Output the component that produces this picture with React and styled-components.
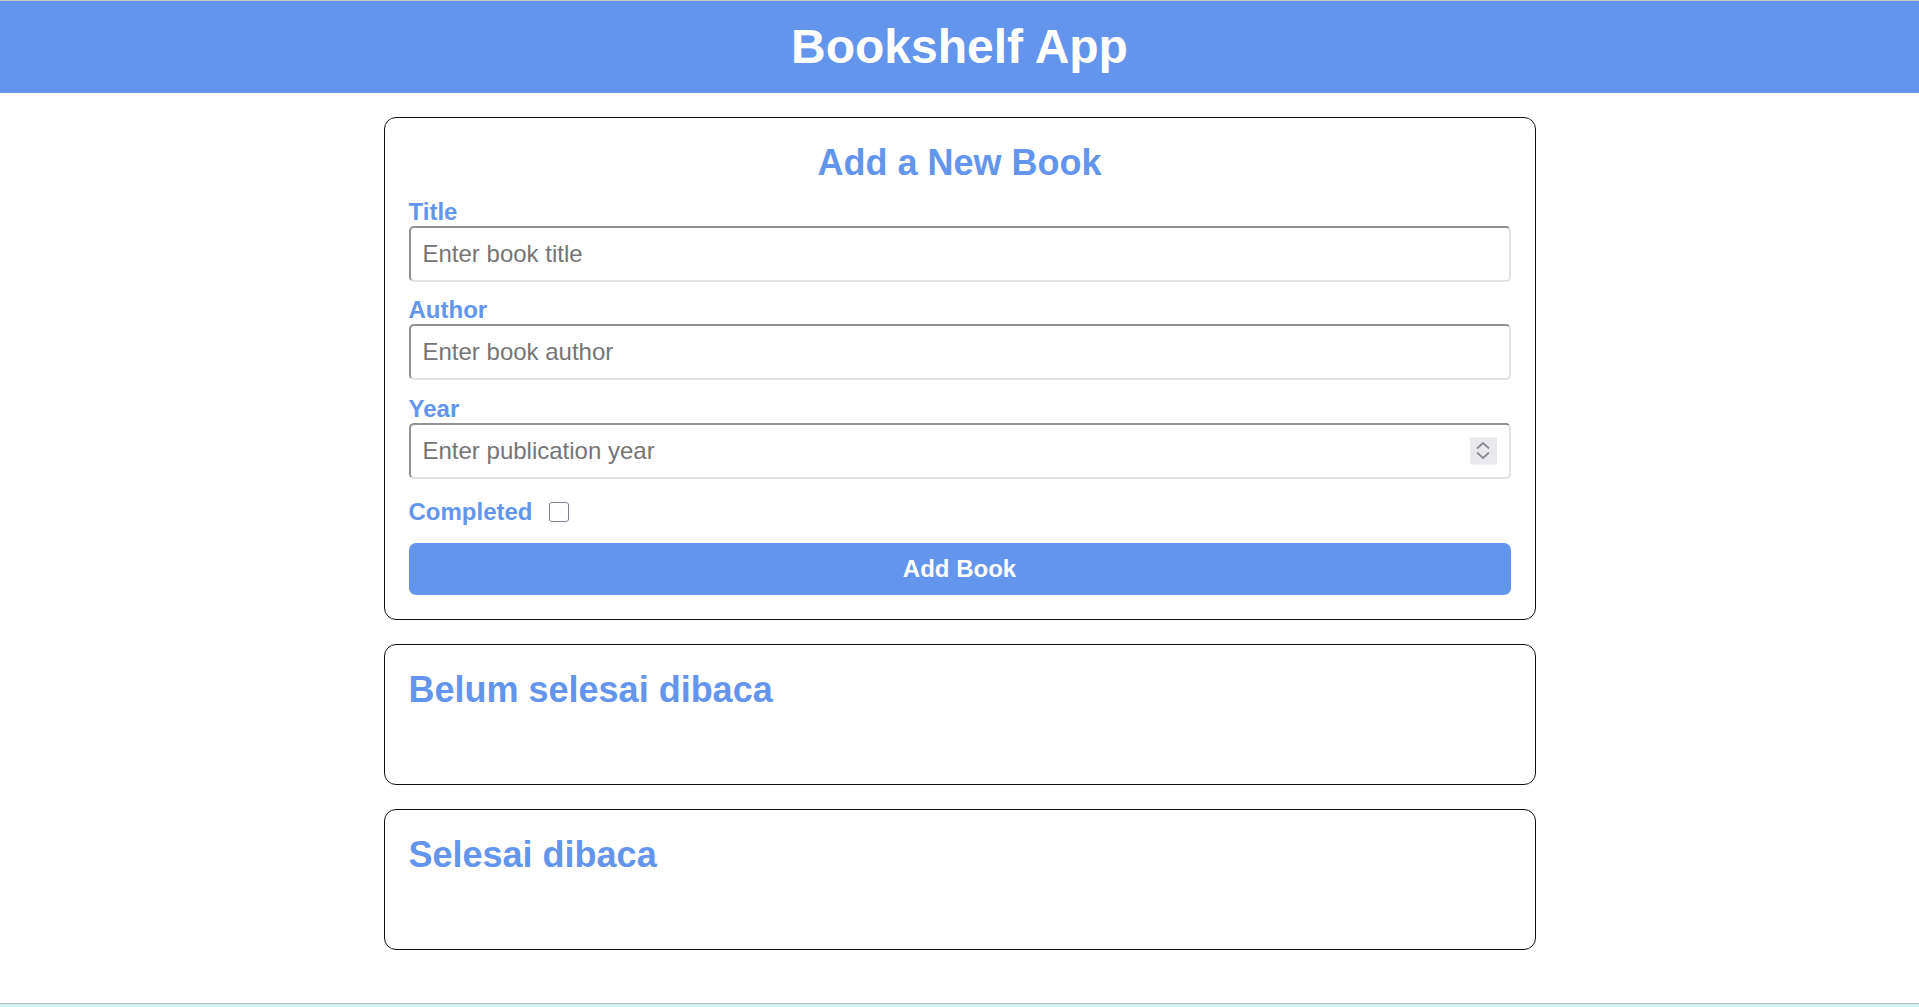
import React from "react";
import styled, { createGlobalStyle } from "styled-components";

const GlobalStyle = createGlobalStyle`
  html, body {
    margin: 0;
    padding: 0;
  }
  body {
    font-family: "Liberation Sans", Arial, sans-serif;
    background: #ffffff;
    color: #000;
  }
  #root {
    min-height: 100vh;
    display: flex;
    flex-direction: column;
  }
`;

const blue = "#6495ed";

const Header = styled.header`
  background: ${blue};
  border-top: 1px solid #c9c9c9;
  height: 92px;
  display: flex;
  align-items: center;
  justify-content: center;
`;

const AppTitle = styled.h1`
  margin: 0 0 1px;
  color: #ffffff;
  font-size: 48px;
  font-weight: 700;
  line-height: normal;
`;

const Main = styled.main`
  width: 1152px;
  margin: 24px auto 0;
  display: flex;
  flex-direction: column;
  gap: 24px;
`;

const Card = styled.section`
  border: 1px solid #111111;
  border-radius: 12px;
  padding: 24px;
  box-sizing: border-box;
`;

const CardTitle = styled.h2`
  margin: 0 0 ${(p) => (p.$center ? "14px" : "14.5px")};
  color: ${blue};
  font-size: 36px;
  font-weight: 700;
  line-height: normal;
  text-align: ${(p) => (p.$center ? "center" : "left")};
`;

const Form = styled.form`
  display: flex;
  flex-direction: column;
`;

const Field = styled.div`
  display: flex;
  flex-direction: column;
  margin-bottom: ${(p) => (p.$last ? "0" : "14.3px")};
`;

const Label = styled.label`
  color: ${blue};
  font-size: 24px;
  font-weight: 700;
  line-height: normal;
`;

const InputWrap = styled.div`
  position: relative;
`;

const Input = styled.input`
  width: 100%;
  box-sizing: border-box;
  font-family: "Liberation Sans", Arial, sans-serif;
  font-size: 24px;
  line-height: normal;
  padding: 12px;
  border-width: 2px;
  border-style: solid;
  border-color: #929292 #e2e2e2 #e2e2e2 #929292;
  border-radius: 5px;
  background: #fff;
  color: #000;
  outline: none;
  -moz-appearance: textfield;
  &::placeholder {
    color: #757575;
  }
  &::-webkit-outer-spin-button,
  &::-webkit-inner-spin-button {
    -webkit-appearance: none;
    margin: 0;
  }
`;

const Spinner = styled.div`
  position: absolute;
  right: 14px;
  top: 50%;
  transform: translateY(-50%);
  width: 27px;
  height: 27px;
  background: #e9e9ed;
  display: flex;
  align-items: center;
  justify-content: center;
`;

const CheckRow = styled.div`
  display: flex;
  align-items: center;
  margin-top: 19.8px;
`;

const Checkbox = styled.input.attrs({ type: "checkbox" })`
  appearance: none;
  -webkit-appearance: none;
  width: 20px;
  height: 20px;
  margin: 0 0 0 16px;
  border: 1px solid #80808f;
  border-radius: 3px;
  background: #fff;
  box-sizing: border-box;
`;

const SubmitButton = styled.button`
  margin-top: 17px;
  width: 100%;
  border: none;
  border-radius: 7px;
  background: ${blue};
  color: #ffffff;
  font-family: "Liberation Sans", Arial, sans-serif;
  font-size: 24px;
  font-weight: 700;
  line-height: normal;
  padding: 12px;
  height: 52px;
  cursor: pointer;
`;

const BookList = styled.div`
  min-height: 34.5px;
`;

const Footer = styled.footer`
  margin-top: auto;
  height: 3px;
  border-top: 1px solid #b2bfbf;
  background: #d2f0f0;
`;

function SpinIcon() {
  return (
    <svg width="16" height="20" viewBox="0 0 16 20" fill="none">
      <path d="M2.5 7.5 L8 2.5 L13.5 7.5" stroke="#8a8a96" strokeWidth="1.8" strokeLinecap="round" strokeLinejoin="round" />
      <path d="M2.5 12.5 L8 17.5 L13.5 12.5" stroke="#8a8a96" strokeWidth="1.8" strokeLinecap="round" strokeLinejoin="round" />
    </svg>
  );
}

export default function App() {
  return (
    <>
      <GlobalStyle />
      <Header>
        <AppTitle>Bookshelf App</AppTitle>
      </Header>
      <Main>
        <Card>
          <CardTitle $center>Add a New Book</CardTitle>
          <Form onSubmit={(e) => e.preventDefault()}>
            <Field>
              <Label htmlFor="title">Title</Label>
              <Input id="title" type="text" placeholder="Enter book title" />
            </Field>
            <Field>
              <Label htmlFor="author">Author</Label>
              <Input id="author" type="text" placeholder="Enter book author" />
            </Field>
            <Field $last>
              <Label htmlFor="year">Year</Label>
              <InputWrap>
                <Input id="year" type="number" placeholder="Enter publication year" />
                <Spinner>
                  <SpinIcon />
                </Spinner>
              </InputWrap>
            </Field>
            <CheckRow>
              <Label htmlFor="completed">Completed</Label>
              <Checkbox id="completed" />
            </CheckRow>
            <SubmitButton type="submit">Add Book</SubmitButton>
          </Form>
        </Card>
        <Card>
          <CardTitle>Belum selesai dibaca</CardTitle>
          <BookList />
        </Card>
        <Card>
          <CardTitle>Selesai dibaca</CardTitle>
          <BookList />
        </Card>
      </Main>
      <Footer />
    </>
  );
}
